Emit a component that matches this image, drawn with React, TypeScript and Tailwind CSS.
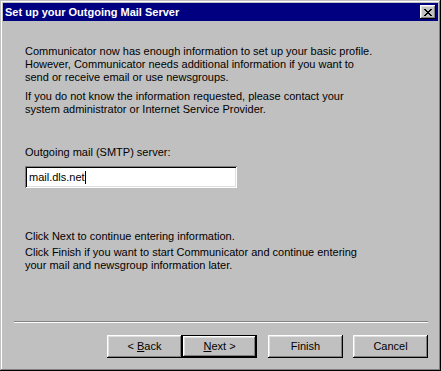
const font = { fontFamily: '"Liberation Sans", Arial, sans-serif' };

const closeRows = ["11000011", "01100110", "00111100", "00011000", "00111100", "01100110", "11000011"];

const CloseGlyph = () => (
  <svg width="8" height="7" viewBox="0 0 8 7" shapeRendering="crispEdges">
    {closeRows.map((row, y) =>
      row.split("").map((c, x) => (c === "1" ? <rect key={`${x}-${y}`} x={x} y={y} width="1" height="1" fill="#000" /> : null))
    )}
  </svg>
);

const Button = ({ children, isDefault }: { children: React.ReactNode; isDefault?: boolean }) => (
  <div
    className={
      isDefault
        ? "w-[75px] h-[23px] border border-black bg-[#c0c0c0] shadow-[inset_-1px_-1px_#000,inset_1px_1px_#fff,inset_-2px_-2px_#808080,inset_2px_2px_#dfdfdf] flex items-center justify-center text-[11px] text-black"
        : "w-[75px] h-[23px] bg-[#c0c0c0] shadow-[inset_-1px_-1px_#000,inset_1px_1px_#fff,inset_-2px_-2px_#808080,inset_2px_2px_#dfdfdf] flex items-center justify-center text-[11px] text-black"
    }
  >
    <span className="whitespace-pre">{children}</span>
  </div>
);

export default function App() {
  return (
    <div
      style={font}
      className="w-[441px] h-[371px] bg-[#c0c0c0] p-[3px] flex flex-col shadow-[inset_-1px_-1px_#000,inset_1px_1px_#c0c0c0,inset_-2px_-2px_#808080,inset_2px_2px_#fff]"
    >
      <div className="h-[18px] bg-[#000080] flex items-center justify-between pl-[2px] pr-[2px]">
        <span className="text-white font-bold text-[11px] leading-[13px]">Set up your Outgoing Mail Server</span>
        <div className="w-[16px] h-[14px] bg-[#c0c0c0] flex items-center justify-center shadow-[inset_-1px_-1px_#000,inset_1px_1px_#fff,inset_-2px_-2px_#808080,inset_2px_2px_#dfdfdf]">
          <CloseGlyph />
        </div>
      </div>

      <div className="flex-1 flex flex-col text-[11px] leading-[13px] text-black">
        <div className="pl-[22px] pr-[10px] pt-[24px]">
          <p>
            Communicator now has enough information to set up your basic profile.
            <br />
            However, Communicator needs additional information if you want to
            <br />
            send or receive email or use newsgroups.
          </p>
          <p className="mt-[6px]">
            If you do not know the information requested, please contact your
            <br />
            system administrator or Internet Service Provider.
          </p>
          <p className="mt-[30px]">Outgoing mail (SMTP) server:</p>
          <div className="mt-[7px] w-[212px] h-[22px] bg-white flex items-center pl-[4px] shadow-[inset_1px_1px_#808080,inset_-1px_-1px_#fff,inset_2px_2px_#000,inset_-2px_-2px_#dfdfdf]">
            <span>mail.dls.net</span>
            <span className="w-px h-[13px] bg-black" />
          </div>
          <p className="mt-[42px]">Click Next to continue entering information.</p>
          <p className="mt-[3px]">
            Click Finish if you want to start Communicator and continue entering
            <br />
            your mail and newsgroup information later.
          </p>
        </div>

        <div className="mt-auto">
          <div className="ml-[11px] mr-[10px] h-[2px] border-t border-t-[#808080] border-b border-b-white" />
          <div className="flex justify-end pr-[10px] pt-[12px] pb-[10px]">
            <Button>
              {"< "}
              <u>B</u>ack
            </Button>
            <Button isDefault>
              <u>N</u>ext {">"}
            </Button>
            <div className="w-[11px]" />
            <Button>Finish</Button>
            <div className="w-[10px]" />
            <Button>Cancel</Button>
          </div>
        </div>
      </div>
    </div>
  );
}
